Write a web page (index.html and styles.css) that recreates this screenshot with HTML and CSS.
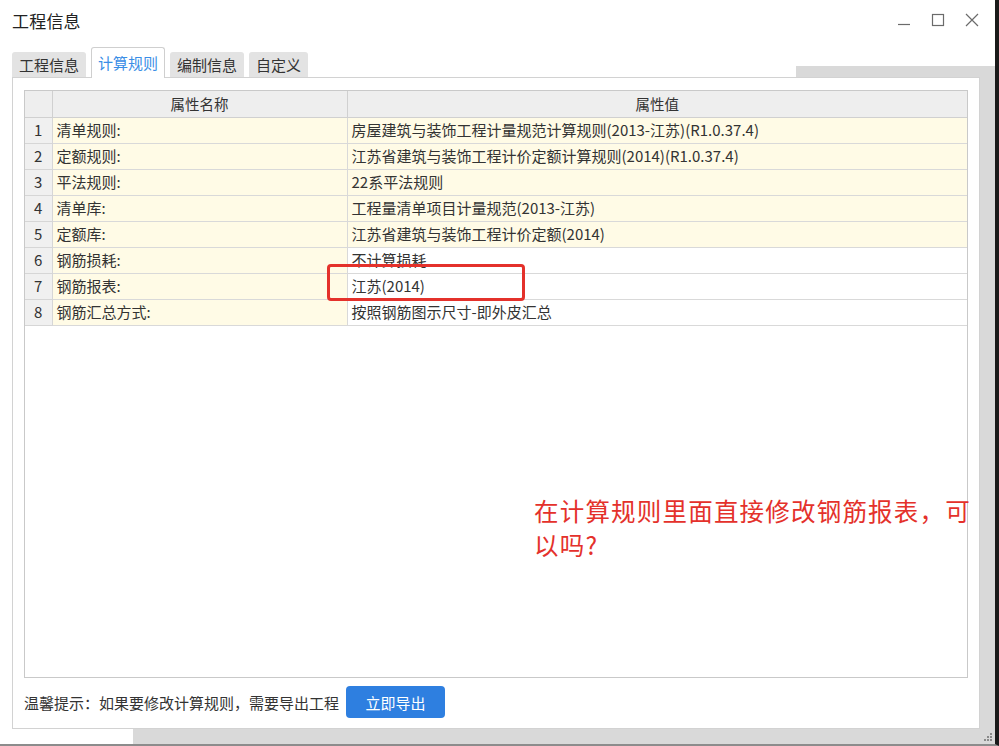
FILE: index.html
```html
<!DOCTYPE html>
<html lang="zh-CN">
<head>
<meta charset="utf-8">
<title>工程信息</title>
<link rel="stylesheet" href="styles.css">
</head>
<body>
<div class="window">
  <header class="titlebar">
    <span class="title">工程信息</span>
    <div class="controls">
      <svg class="ctl" width="14" height="14" viewBox="0 0 14 14"><path d="M1 11.5H13" stroke="#6b6b6b" stroke-width="1.2" fill="none"/></svg>
      <svg class="ctl" width="14" height="14" viewBox="0 0 14 14"><rect x="1.5" y="1.5" width="11" height="11" stroke="#6b6b6b" stroke-width="1.2" fill="none"/></svg>
      <svg class="ctl" width="14" height="14" viewBox="0 0 14 14"><path d="M1 1L13 13M13 1L1 13" stroke="#6b6b6b" stroke-width="1.2" fill="none"/></svg>
    </div>
  </header>
  <nav class="tabs">
    <span class="tab">工程信息</span>
    <span class="tab active">计算规则</span>
    <span class="tab">编制信息</span>
    <span class="tab">自定义</span>
  </nav>
  <section class="panel">
    <div class="grid-wrap">
      <table class="grid">
        <colgroup><col class="c-num"><col class="c-name"><col class="c-val"></colgroup>
        <thead>
          <tr><th></th><th>属性名称</th><th>属性值</th></tr>
        </thead>
        <tbody>
          <tr class="lock"><td class="num">1</td><td>清单规则:</td><td>房屋建筑与装饰工程计量规范计算规则(2013-江苏)(R1.0.37.4)</td></tr>
          <tr class="lock"><td class="num">2</td><td>定额规则:</td><td>江苏省建筑与装饰工程计价定额计算规则(2014)(R1.0.37.4)</td></tr>
          <tr class="lock"><td class="num">3</td><td>平法规则:</td><td>22系平法规则</td></tr>
          <tr class="lock"><td class="num">4</td><td>清单库:</td><td>工程量清单项目计量规范(2013-江苏)</td></tr>
          <tr class="lock"><td class="num">5</td><td>定额库:</td><td>江苏省建筑与装饰工程计价定额(2014)</td></tr>
          <tr><td class="num">6</td><td class="name">钢筋损耗:</td><td>不计算损耗</td></tr>
          <tr><td class="num">7</td><td class="name">钢筋报表:</td><td>江苏(2014)</td></tr>
          <tr><td class="num">8</td><td class="name">钢筋汇总方式:</td><td>按照钢筋图示尺寸-即外皮汇总</td></tr>
        </tbody>
      </table>
    </div>
    <footer class="tipbar">
      <span class="tip">温馨提示：如果要修改计算规则，需要导出工程</span>
      <button class="export">立即导出</button>
    </footer>
  </section>
  <div class="highlight"></div>
  <p class="note">在计算规则里面直接修改钢筋报表，可<br>以吗?</p>
  <svg class="grip" width="8" height="8" viewBox="0 0 8 8">
    <rect x="6" y="0" width="2" height="2" fill="#8a8a8a"/>
    <rect x="3" y="3" width="2" height="2" fill="#8a8a8a"/><rect x="6" y="3" width="2" height="2" fill="#8a8a8a"/>
    <rect x="0" y="6" width="2" height="2" fill="#8a8a8a"/><rect x="3" y="6" width="2" height="2" fill="#8a8a8a"/><rect x="6" y="6" width="2" height="2" fill="#8a8a8a"/>
  </svg>
</div>
</body>
</html>
```
FILE: styles.css
```css
* { box-sizing: border-box; }
html, body { margin: 0; padding: 0; background: #ffffff; }
body {
  font-family: "Noto Sans CJK SC", "Noto Sans", "Liberation Sans", sans-serif;
  color: #333333;
  width: 999px;
  height: 746px;
  overflow: hidden;
}
.window {
  position: relative;
  width: 999px;
  height: 746px;
  border-right: 4px solid #1a1a1a;
  border-bottom: 2px solid #8c8c8c;
  background:
    linear-gradient(#d9d9d9, #d9d9d9) right 0 top 66px / 199px 678px no-repeat,
    linear-gradient(#d9d9d9, #d9d9d9) left 133px top 729px / 862px 15px no-repeat,
    #ffffff;
}
.titlebar {
  height: 40px;
  display: flex;
  align-items: center;
  justify-content: space-between;
  padding: 0 16px 0 12px;
}
.title {
  font-size: 17px;
  color: #222222;
  letter-spacing: 0.2px;
}
.controls {
  display: flex;
  gap: 20px;
  align-items: center;
}
.ctl { display: block; }
.tabs {
  height: 37px;
  display: flex;
  align-items: flex-end;
  gap: 5px;
  padding-left: 12px;
  position: relative;
  z-index: 2;
}
.tab {
  height: 25px;
  padding: 0 7px 1px;
  display: flex;
  align-items: center;
  font-size: 15px;
  color: #333333;
  background: #e3e3e3;
  border-radius: 3px 3px 0 0;
}
.tab.active {
  height: 31px;
  margin-bottom: -1px;
  background: #ffffff;
  color: #3a8ee6;
  border: 1px solid #cfcfcf;
  border-bottom: 0;
  padding: 0 6px 1px;
}
.panel {
  margin-left: 12px;
  width: 968px;
  height: 652px;
  border: 1px solid #d2d2d2;
  background: #ffffff;
  padding: 12px 11px 0 11px;
  display: flex;
  flex-direction: column;
}
.grid-wrap {
  height: 588px;
  border: 1px solid #c9c9c9;
  background: #ffffff;
}
.grid {
  width: 100%;
  border-collapse: collapse;
  table-layout: fixed;
  font-size: 15px;
}
.c-num { width: 27px; }
.c-name { width: 295px; }
.grid th, .grid td {
  height: 26px;
  padding: 0 0 0 4px;
  border: 1px solid #d9d9d9;
  white-space: nowrap;
  overflow: hidden;
  font-weight: normal;
  line-height: 24px;
  color: #333333;
}
.grid th {
  background: #eeeeee;
  text-align: center;
  border-top: 0;
  border-color: #d0d0d0;
  padding: 0;
  font-size: 14.5px;
}
.grid tr > :first-child { border-left: 0; }
.grid tr > :last-child { border-right: 0; }
.grid td.num {
  background: #f0f0f0;
  text-align: center;
  padding: 0;
  border-color: #d6d6d6;
}
.grid tr.lock td { background: #fffbe6; }
.grid tr.lock td.num { background: #f0f0f0; }
.grid td.name { background: #fffbe6; }
.tipbar {
  display: flex;
  align-items: center;
  gap: 7px;
  height: 50px;
  padding-bottom: 2px;
}
.tip {
  font-size: 15px;
  color: #333333;
}
.export {
  width: 99px;
  height: 32px;
  border: 0;
  border-radius: 4px;
  background: #2e7fe0;
  color: #ffffff;
  font-family: inherit;
  font-size: 15px;
  padding: 0;
}
.highlight {
  position: absolute;
  left: 327px;
  top: 264px;
  width: 198px;
  height: 37px;
  border: 3px solid #e4312b;
  border-radius: 4px;
}
.note {
  position: absolute;
  left: 534px;
  top: 494px;
  margin: 0;
  font-size: 24.5px;
  line-height: 34px;
  letter-spacing: 1.2px;
  color: #e4312b;
}
.grip {
  position: absolute;
  right: 3px;
  bottom: 3px;
}
```
